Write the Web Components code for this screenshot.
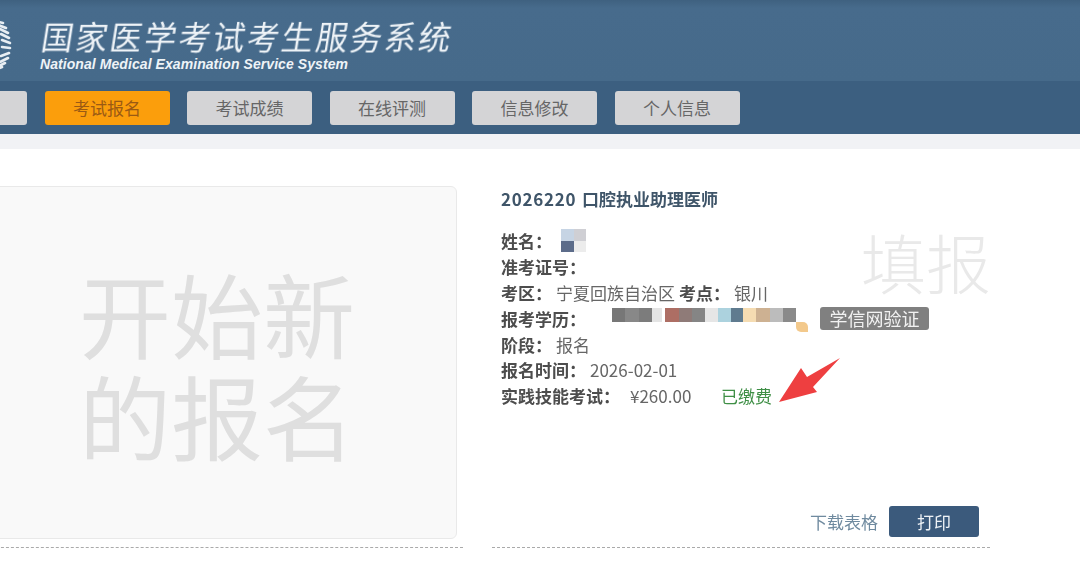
<!DOCTYPE html>
<html lang="zh-CN">
<head>
<meta charset="utf-8">
<title>国家医学考试考生服务系统</title>
<style>
  html, body { margin: 0; height: 569px; overflow: hidden; background: #fff; }
  body { font-family: "Noto Sans CJK SC", "Liberation Sans", sans-serif; color: #555; }
</style>
</head>
<body>
<exam-page>
  <exam-header slot="header"></exam-header>
  <nav-bar slot="nav">
    <nav-button></nav-button>
    <nav-button active>考试报名</nav-button>
    <nav-button>考试成绩</nav-button>
    <nav-button>在线评测</nav-button>
    <nav-button>信息修改</nav-button>
    <nav-button>个人信息</nav-button>
  </nav-bar>
  <new-signup-card slot="left"></new-signup-card>
  <record-panel slot="right" code="2026220" heading="口腔执业助理医师" stamp="填报">
    <info-row label="姓名："><name-mosaic></name-mosaic></info-row>
    <info-row label="准考证号："></info-row>
    <info-row label="考区：">宁夏回族自治区<b class="inline-label">考点：</b>银川</info-row>
    <info-row label="报考学历："><edu-mosaic></edu-mosaic><tag-badge>学信网验证</tag-badge></info-row>
    <info-row label="阶段：">报名</info-row>
    <info-row label="报名时间：">2026-02-01</info-row>
    <info-row label="实践技能考试："><fee-status amount="¥260.00">已缴费</fee-status></info-row>
  </record-panel>
</exam-page>

<script>
// page shell
class ExamPage extends HTMLElement {
  constructor() {
    super();
    this.attachShadow({ mode: 'open' });
    this.shadowRoot.innerHTML = `
      <style>
        :host { display: block; width: 1080px; height: 569px; overflow: hidden; position: relative; }
        .wrap { filter: blur(0.45px); height: 569px; }
        .strip { height: 15px; background: #f1f2f5; }
        .main { display: flex; margin-left: -29px; padding-top: 37px; }
        .col-left { width: 492px; flex: none; }
        .col-right { width: 498px; flex: none; margin-left: 29px; margin-top: -37px; }
      </style>
      <div class="wrap">
        <slot name="header"></slot>
        <slot name="nav"></slot>
        <div class="strip"></div>
        <div class="main">
          <div class="col-left"><slot name="left"></slot></div>
          <div class="col-right"><slot name="right"></slot></div>
        </div>
      </div>
    `;
  }
}

class ExamHeader extends HTMLElement {
  constructor() {
    super();
    this.attachShadow({ mode: 'open' });
    // laurel leaves, only the right half of the emblem is on screen
    const leaves = [[23,3,2],[28,6,3],[33,8,4],[38,9,4],[43,10,3],[48,10,1],[53,9,-3],[58,8,-4],[63,5,-4],[67,2,-3]]
      .map(([y, x, d]) => `<line x1="${x - 8}" y1="${y - d}" x2="${x}" y2="${y}"/>`).join('');
    this.shadowRoot.innerHTML = `
      <style>
        :host { display: flex; height: 81px; box-sizing: border-box; padding: 18px 0 0 39px; position: relative;
          background: linear-gradient(#3f6180 0, #476b8c 8px, #466a8a 100%); color: #eef3f7; }
        svg { position: absolute; left: 0; top: 0; }
        .cn { font: 400 32px/37px "Noto Sans CJK SC", sans-serif; letter-spacing: 2.3px; white-space: nowrap;
          transform: skewX(-9deg); transform-origin: 0 100%; }
        .en { font: italic 700 14px/16px "Liberation Sans", sans-serif; margin: 1px 0 0 1px; white-space: nowrap; letter-spacing: .07px; }
      </style>
      <svg width="14" height="81" stroke="#e8eef3" stroke-width="2.6" stroke-linecap="round">${leaves}</svg>
      <div>
        <div class="cn">国家医学考试考生服务系统</div>
        <div class="en">National Medical Examination Service System</div>
      </div>
    `;
  }
}

class NavBar extends HTMLElement {
  constructor() {
    super();
    this.attachShadow({ mode: 'open' });
    this.shadowRoot.innerHTML = `
      <style>
        :host { display: flex; height: 53px; box-sizing: border-box; padding-top: 10px; background: #3c5f80; overflow: hidden; }
        .items { display: flex; gap: 17.5px; margin-left: -98px; height: 33.5px; }
      </style>
      <div class="items"><slot></slot></div>
    `;
  }
}

class NavButton extends HTMLElement {
  constructor() {
    super();
    this.attachShadow({ mode: 'open' });
    this.shadowRoot.innerHTML = `
      <style>
        :host { display: flex; align-items: center; justify-content: center; flex: none; width: 125px;
          border-radius: 3px; background: #d4d4d6; color: #666; font-size: 17px; }
        :host([active]) { background: #fb9e0c; color: #9a5a14; }
      </style>
      <slot></slot>
    `;
  }
}

class NewSignupCard extends HTMLElement {
  constructor() {
    super();
    this.attachShadow({ mode: 'open' });
    this.shadowRoot.innerHTML = `
      <style>
        :host { display: block; border-bottom: 1px dashed #aaa; padding: 0 6px 8px; }
        .card { height: 353px; box-sizing: border-box; border: 1px solid #e9e9e9; border-radius: 6px; background: #f9f9f9;
          display: flex; align-items: center; justify-content: center; text-align: center;
          font-size: 92px; line-height: 102px; color: #dfdfdf; }
      </style>
      <div class="card">开始新<br>的报名</div>
    `;
  }
}

class RecordPanel extends HTMLElement {
  constructor() {
    super();
    this.attachShadow({ mode: 'open' });
  }
  connectedCallback() {
    const code = this.getAttribute('code') || '';
    const heading = this.getAttribute('heading') || '';
    const stamp = this.getAttribute('stamp') || '';
    this.shadowRoot.innerHTML = `
      <style>
        :host { display: block; position: relative; height: 399px; box-sizing: border-box; padding: 37px 0 0 9px;
          border-bottom: 1px dashed #aaa; }
        h2 { margin: 0 0 16px; font: 700 17px/26px "Noto Sans CJK SC", sans-serif; color: #3f5569; }
        h2 span { letter-spacing: .7px; margin-right: 2px; }
        .rows { display: flex; flex-direction: column; }
        .stamp { position: absolute; left: 369px; top: 72px; font-size: 65px; line-height: 80px; color: #e9e9e9;
          font-weight: 300; white-space: nowrap; }
        .foot { position: absolute; right: 11px; bottom: 10px; display: flex; align-items: center; gap: 11px; }
        .link { color: #6f8a9f; font-size: 17px; }
        .print { width: 90px; height: 31px; display: flex; align-items: center; justify-content: center;
          border-radius: 3px; background: #3b5a7c; color: #eef2f6; font-size: 17px; }
        .arrow { position: absolute; left: 283px; top: 206px; }
      </style>
      <h2><span>${code}</span> ${heading}</h2>
      <div class="rows"><slot></slot></div>
      <div class="stamp">${stamp}</div>
      <svg class="arrow" width="70" height="50" viewBox="775 355 70 50">
        <polygon fill="#ee3f40" points="779,402 801,368 807,377 840,358 813,387 817,392"/>
      </svg>
      <div class="foot"><span class="link">下载表格</span><div class="print">打印</div></div>
    `;
  }
}

class InfoRow extends HTMLElement {
  constructor() {
    super();
    this.attachShadow({ mode: 'open' });
  }
  connectedCallback() {
    this.shadowRoot.innerHTML = `
      <style>
        :host { display: flex; align-items: center; height: 25.8px; font-size: 17px; color: #666; white-space: nowrap; }
        b { font-weight: 700; color: #4d4d4d; margin-right: 4px; }
        ::slotted(.inline-label) { font-weight: 700; color: #4d4d4d; margin: 0 4px; }
      </style>
      <b>${this.getAttribute('label') || ''}</b><slot></slot>
    `;
  }
}

class NameMosaic extends HTMLElement {
  constructor() {
    super();
    this.attachShadow({ mode: 'open' });
    this.shadowRoot.innerHTML = `
      <style>
        :host { display: grid; grid-template-columns: 13px 12px; grid-template-rows: 12px 11px; margin-left: 5px; filter: blur(.6px); }
        i:nth-of-type(1) { background: #c6d4e4; }
        i:nth-of-type(2) { background: #cfcfd4; }
        i:nth-of-type(3) { background: #5c6c8a; }
        i:nth-of-type(4) { background: #ececec; }
      </style>
      <i></i><i></i><i></i><i></i>
    `;
  }
}

class EduMosaic extends HTMLElement {
  constructor() {
    super();
    this.attachShadow({ mode: 'open' });
    const blocks = [[13,'#777'],[14,'#888'],[13,'#7c7c7c'],[10,'#e4e4e4'],[3,'#fff'],[14,'#ad6e64'],[13,'#8f7b78'],[13,'#858585'],[13,'#e6e6e6'],[13,'#acd2de'],[12,'#5f7b8f'],[13,'#f5dcb2'],[14,'#cdb192'],[13,'#bcbcbc'],[13,'#8a8a8a']]
      .map(([w, c]) => `<i style="width:${w}px;background:${c}"></i>`).join('');
    this.shadowRoot.innerHTML = `
      <style>
        :host { display: block; margin: 0 0 6px 22px; filter: blur(.6px); position: relative; width: 196px; height: 14px; }
        .bar { display: flex; height: 14px; }
        .tail { position: absolute; left: 184px; top: 14px; width: 12px; height: 10px; background: #f3c98c; border-radius: 0 5px 0 5px; }
      </style>
      <div class="bar">${blocks}</div><div class="tail"></div>
    `;
  }
}

class TagBadge extends HTMLElement {
  constructor() {
    super();
    this.attachShadow({ mode: 'open' });
    this.shadowRoot.innerHTML = `
      <style>
        :host { display: flex; align-items: center; justify-content: center; width: 109px; height: 23px; margin-left: 12px;
          border-radius: 3px; background: #808080; color: #f2f2f2; font-size: 18px; }
      </style>
      <slot></slot>
    `;
  }
}

class FeeStatus extends HTMLElement {
  constructor() {
    super();
    this.attachShadow({ mode: 'open' });
  }
  connectedCallback() {
    this.shadowRoot.innerHTML = `
      <style>
        :host { display: flex; align-items: center; margin-left: 6px; }
        .amount { width: 91px; color: #666; }
        .paid { color: #3f8f46; }
      </style>
      <span class="amount">${this.getAttribute('amount') || ''}</span>
      <span class="paid"><slot></slot></span>
    `;
  }
}

customElements.define('exam-page', ExamPage);
customElements.define('exam-header', ExamHeader);
customElements.define('nav-bar', NavBar);
customElements.define('nav-button', NavButton);
customElements.define('new-signup-card', NewSignupCard);
customElements.define('record-panel', RecordPanel);
customElements.define('info-row', InfoRow);
customElements.define('name-mosaic', NameMosaic);
customElements.define('edu-mosaic', EduMosaic);
customElements.define('tag-badge', TagBadge);
customElements.define('fee-status', FeeStatus);
</script>
</body>
</html>
